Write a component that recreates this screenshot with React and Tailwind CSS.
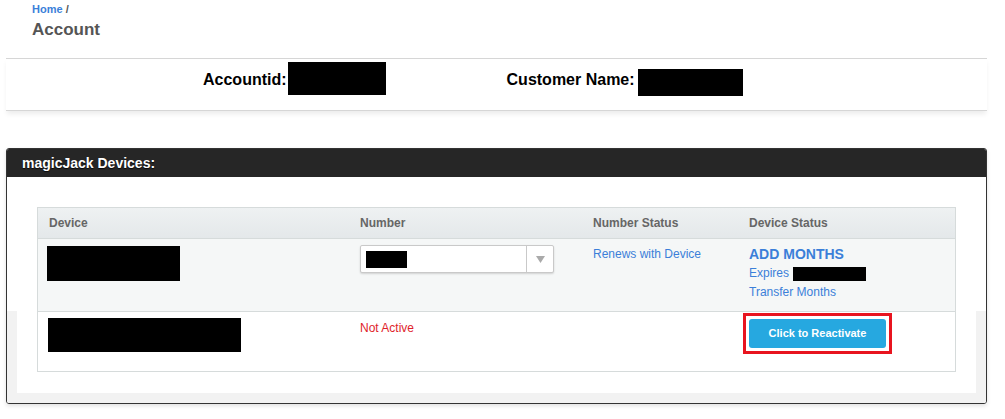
const Redacted = ({ className }) => <span className={`inline-block bg-black ${className}`} />;

const NumberSelect = () => (
    <div className="flex h-[28px] w-[194px] rounded-[2px] border border-[#c9c9c9] bg-white shadow-[0_1px_2px_rgba(0,0,0,0.15)]">
        <div className="flex flex-1 items-center pl-[5px]">
            <Redacted className="h-[17px] w-[41px]" />
        </div>
        <div className="flex w-[27px] items-center justify-center border-l border-[#c9c9c9]">
            <svg width="9" height="7" viewBox="0 0 9 7"><path d="M0 0h9L4.5 7z" fill="#aaaaaa" /></svg>
        </div>
    </div>
);

const App = () => {
    return (
        <div className="min-h-[419px] bg-white font-['Liberation_Sans',Arial,sans-serif] text-[12px]">
            <div className="px-[32px] pt-[3px]">
                <div className="text-[11px] font-bold leading-[13px]">
                    <span className="text-[#3b7fd9]">Home</span> <span className="text-[#555]">/</span>
                </div>
                <h1 className="mt-[3px] text-[17px] font-bold leading-[22px] text-[#555]">Account</h1>
            </div>

            <div className="ml-[6px] mr-[18px] mt-[17px] border-y border-[#d6d6d6] shadow-[0_4px_5px_-1px_rgba(0,0,0,0.08)]">
                <div className="flex h-[51px] items-start pl-[197px] text-[16px] font-bold text-black">
                    <div className="flex items-start">
                        <span className="pt-[11px] leading-[20px]">Accountid:</span>
                        <Redacted className="ml-[1px] mt-[3px] h-[33px] w-[98px]" />
                    </div>
                    <div className="ml-[121px] flex items-start">
                        <span className="pt-[11px] leading-[20px]">Customer Name:</span>
                        <Redacted className="ml-[3px] mt-[10px] h-[27px] w-[105px]" />
                    </div>
                </div>
            </div>

            <div className="ml-[6px] mr-[18px] mt-[37px] overflow-hidden rounded-[3px] border border-[#333] shadow-[0_2px_4px_rgba(0,0,0,0.12)]">
                <div className="flex h-[28px] items-center bg-[#262626] px-[15px] text-[14px] font-bold text-white [text-shadow:0_1px_1px_rgba(0,0,0,0.8)]">
                    magicJack Devices:
                </div>
                <div className="bg-[linear-gradient(to_bottom,#ffffff_0,#ffffff_134px,#f2f2f2_134px)] px-[10px] pb-[10px]">
                    <div className="bg-white px-[20px] pb-[21px] pt-[30px]">
                        <div className="border border-[#d6dbdb]">
                            <div className="flex h-[31px] items-center border-b border-[#d6dbdb] bg-[linear-gradient(to_bottom,#eef1f2,#e4e8ea)] font-bold text-[#666]">
                                <div className="w-[311px] pl-[11px]">Device</div>
                                <div className="w-[233px] pl-[11px]">Number</div>
                                <div className="w-[156px] pl-[11px]">Number Status</div>
                                <div className="flex-1 pl-[11px]">Device Status</div>
                            </div>

                            <div className="flex h-[73px] border-b border-[#d6dbdb] bg-[#f5f7f7]">
                                <div className="w-[311px] pl-[9px] pt-[7px]">
                                    <Redacted className="h-[35px] w-[133px]" />
                                </div>
                                <div className="w-[233px] pl-[11px] pt-[6px]">
                                    <NumberSelect />
                                </div>
                                <div className="w-[156px] pl-[11px] pt-[7px] leading-[16px] text-[#3b7fd9]">Renews with Device</div>
                                <div className="flex-1 pl-[11px] pt-[6px] leading-[19px] text-[#3b7fd9]">
                                    <div className="text-[14px] font-bold leading-[19px]">ADD MONTHS</div>
                                    <div className="flex items-center">
                                        Expires <Redacted className="ml-[4px] h-[14px] w-[73px]" />
                                    </div>
                                    <div>Transfer Months</div>
                                </div>
                            </div>

                            <div className="flex h-[59px] bg-white">
                                <div className="w-[311px] pl-[10px] pt-[6px]">
                                    <Redacted className="h-[34px] w-[193px]" />
                                </div>
                                <div className="w-[233px] pl-[11px] pt-[8px] leading-[16px] text-[#e01e2b]">Not Active</div>
                                <div className="w-[156px]" />
                                <div className="flex-1 pl-[5px] pt-[1px]">
                                    <div className="inline-block border-[3px] border-[#e8141f] p-[3px]">
                                        <button className="h-[29px] w-[137px] rounded-[3px] bg-[#26a8e0] text-[11px] font-bold text-white">
                                            Click to Reactivate
                                        </button>
                                    </div>
                                </div>
                            </div>
                        </div>
                    </div>
                </div>
            </div>
        </div>
    );
};

export default App;
